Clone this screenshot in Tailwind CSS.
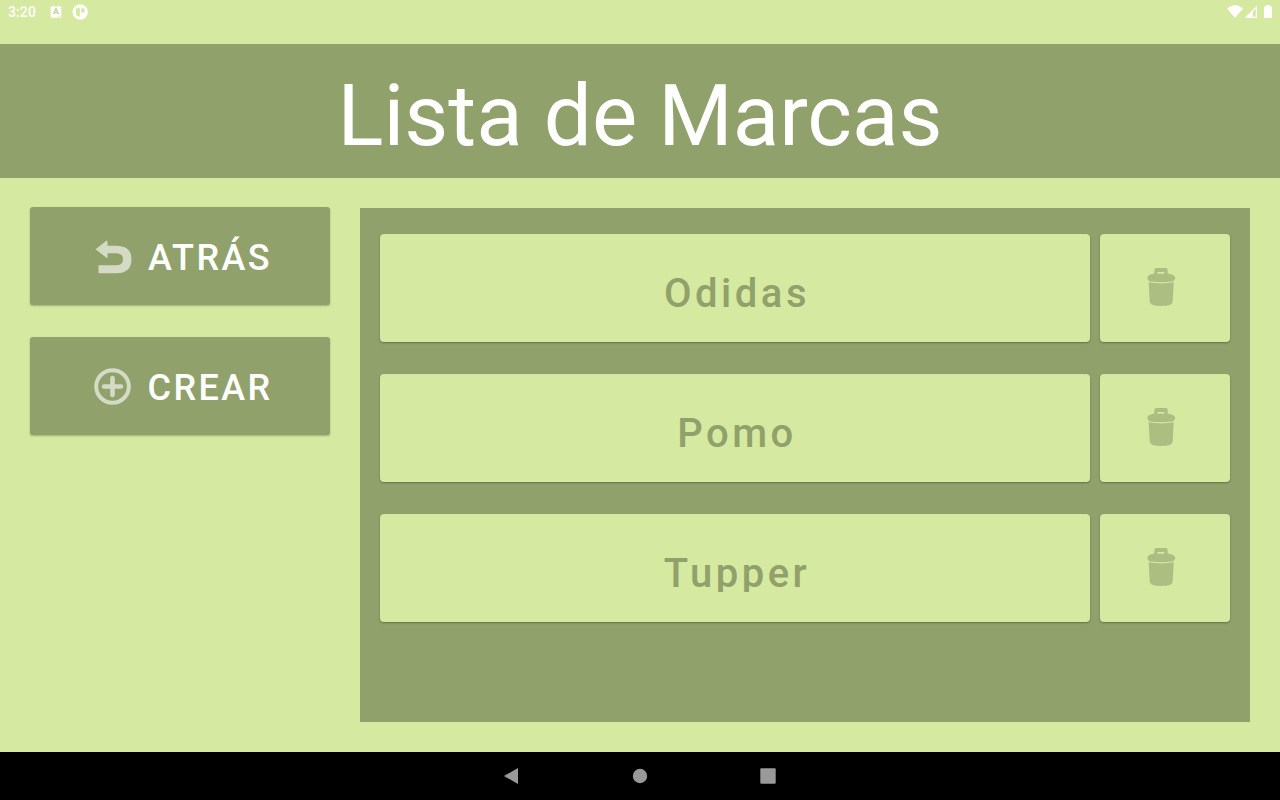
<!DOCTYPE html>
<html lang="es"><head><meta charset="utf-8"><title>Lista de Marcas</title>
<script src="https://cdn.jsdelivr.net/npm/@tailwindcss/browser@4"></script></head>
<body class="w-[1280px] h-[800px] overflow-hidden bg-[#d5e9a0] font-['Roboto',sans-serif] flex flex-col">
<svg class="hidden">
  <symbol id="trash" viewBox="0 0 30 40"><path fill-rule="evenodd" d="M8.300 6.500V3Q8.300 1 10.300 1H19.700Q21.700 1 21.700 3V6.500Q29.200 7.500 29.200 11Q29.200 13.500 26.500 14.400Q15 16 4 14.400Q1.300 13.500 1.300 11Q1.300 7.500 8.300 6.500ZM11.500 6.700H18.300V5H11.500Z"/><path d="M2.700 15.300Q15 17.500 27.700 15.300L26.700 34.500Q26.500 39 15.200 39Q4 39 3.700 34.500Z"/></symbol>
</svg>
<header class="h-[44px] shrink-0 flex items-start justify-between pl-2 pr-[8px] text-white">
  <div class="flex h-6 items-center">
    <span class="w-[42px] text-sm font-medium tracking-[0.1px] leading-6">3:20</span>
    <svg class="w-3 h-3 mr-[10px]" viewBox="0 0 12 12"><rect x=".7" y=".3" width="10.600" height="11.400" rx="1" fill="#fff"/><path d="M3.500 8.300 6 2.500 8.500 8.300M4.500 6.600H7.500" fill="none" stroke="#c3d596" stroke-width="1.300"/><path d="M7.500 10.300H10" stroke="#d5e9a0" stroke-width=".8"/></svg>
    <svg class="w-4 h-4" viewBox="0 0 16 16"><circle cx="8.200" cy="8" r="7.700" fill="#fff"/><path d="M4.800 4.300H7.900V12.600H6.800Q3.900 11.500 3.900 8.500V5.300Q3.900 4.300 4.800 4.300ZM9.200 4.300H11.400Q12.700 4.300 12.700 6.400Q12.700 8.500 11.400 8.500H9.200Z" fill="#d5e9a0"/></svg>
  </div>
  <svg class="w-[46px] h-6" viewBox="0 0 46 24" fill="#fff"><path d="M1 8.500Q9 1.500 17 8.500L9 18Z"/><path fill-rule="evenodd" d="M31 5.500V18H18.500ZM29.800 8.500V16.800H26.800V11.600Z"/><path d="M38 6.500H40V5H44V6.500H46V18H38Z"/></svg>
</header>
<h1 class="h-[134px] shrink-0 bg-[#90a16b] text-white text-[85.33px] leading-[144px] text-center">Lista de Marcas</h1>
<main class="h-[574px] shrink-0 flex gap-[30px] p-[30px]">
  <nav class="w-[300px] -mt-px flex flex-col gap-8">
    <button class="h-[98px] rounded-[3px] bg-[#90a16b] shadow-[0_1px_2px_rgba(0,0,0,0.25)] flex items-center pl-[64px] text-white text-[36px] font-medium tracking-[2.4px]">
      <svg class="w-[38px] h-[37px] mr-4" viewBox="0 0 38 37" fill="#d4dac4"><path transform="translate(0 .8)" d="M1.500 10.500 12.500 2Q13.500 1.500 13.500 3V7H22Q37.500 7 37.500 20.500Q37.500 34.500 22 34.500H5.500Q4.500 34.500 4.500 33.500V27.500Q4.500 26.500 5.500 26.500H22Q29 26.500 29 20.500Q29 14.500 22 14.500H13.500V18.500Q13.500 20 12.500 19Z"/></svg>
      <span class="leading-[42px] pt-1">ATRÁS</span>
    </button>
    <button class="h-[98px] rounded-[3px] bg-[#90a16b] shadow-[0_1px_2px_rgba(0,0,0,0.25)] flex items-center pl-[64px] text-white text-[36px] font-medium tracking-[2.4px]">
      <svg class="w-[38px] h-[38px] mr-[15.500px]" viewBox="0 0 38 38" fill="none" stroke="#d4dac4"><circle cx="18.500" cy="19.500" r="16.300" stroke-width="4"/><path stroke-width="4.600" stroke-linecap="round" d="M18.500 11V28M10 19.500H27"/></svg>
      <span class="leading-[42px] pt-1">CREAR</span>
    </button>
  </nav>
  <section class="w-[890px] h-[514px] bg-[#90a16b] px-5 pt-[26px] flex flex-col gap-8 text-[#90a16b]">
    <div class="flex gap-[10px] h-[108px]">
      <button class="w-[710px] rounded-[4px] bg-[#d5e9a0] shadow-[0_1px_2px_rgba(0,0,0,0.3)] text-[40px] font-medium tracking-[3.5px] pt-[8px] pl-[4px]"><span class="block h-[40px] overflow-hidden leading-[43px]">Odidas</span></button>
      <button class="w-[130px] rounded-[4px] bg-[#d5e9a0] shadow-[0_1px_2px_rgba(0,0,0,0.3)] flex pt-[33px] pl-[46px]"><svg class="w-[30px] h-[40px] fill-[#acbe82]"><use href="#trash"/></svg></button>
    </div>
    <div class="flex gap-[10px] h-[108px]">
      <button class="w-[710px] rounded-[4px] bg-[#d5e9a0] shadow-[0_1px_2px_rgba(0,0,0,0.3)] text-[40px] font-medium tracking-[3.5px] pt-[8px] pl-[4px]"><span class="block h-[40px] overflow-hidden leading-[43px]">Pomo</span></button>
      <button class="w-[130px] rounded-[4px] bg-[#d5e9a0] shadow-[0_1px_2px_rgba(0,0,0,0.3)] flex pt-[33px] pl-[46px]"><svg class="w-[30px] h-[40px] fill-[#acbe82]"><use href="#trash"/></svg></button>
    </div>
    <div class="flex gap-[10px] h-[108px]">
      <button class="w-[710px] rounded-[4px] bg-[#d5e9a0] shadow-[0_1px_2px_rgba(0,0,0,0.3)] text-[40px] font-medium tracking-[3.5px] pt-[8px] pl-[4px]"><span class="block h-[40px] overflow-hidden leading-[43px]">Tupper</span></button>
      <button class="w-[130px] rounded-[4px] bg-[#d5e9a0] shadow-[0_1px_2px_rgba(0,0,0,0.3)] flex pt-[33px] pl-[46px]"><svg class="w-[30px] h-[40px] fill-[#acbe82]"><use href="#trash"/></svg></button>
    </div>
  </section>
</main>
<footer class="h-12 shrink-0 bg-black flex items-center justify-center">
  <svg class="w-[280px] h-12" viewBox="0 0 280 48" fill="#999"><path d="M4 24 18 16V32Z"/><circle cx="140" cy="24" r="7.200"/><rect x="260.300" y="16.300" width="15.400" height="15.400" rx="1"/></svg>
</footer>
</body></html>
